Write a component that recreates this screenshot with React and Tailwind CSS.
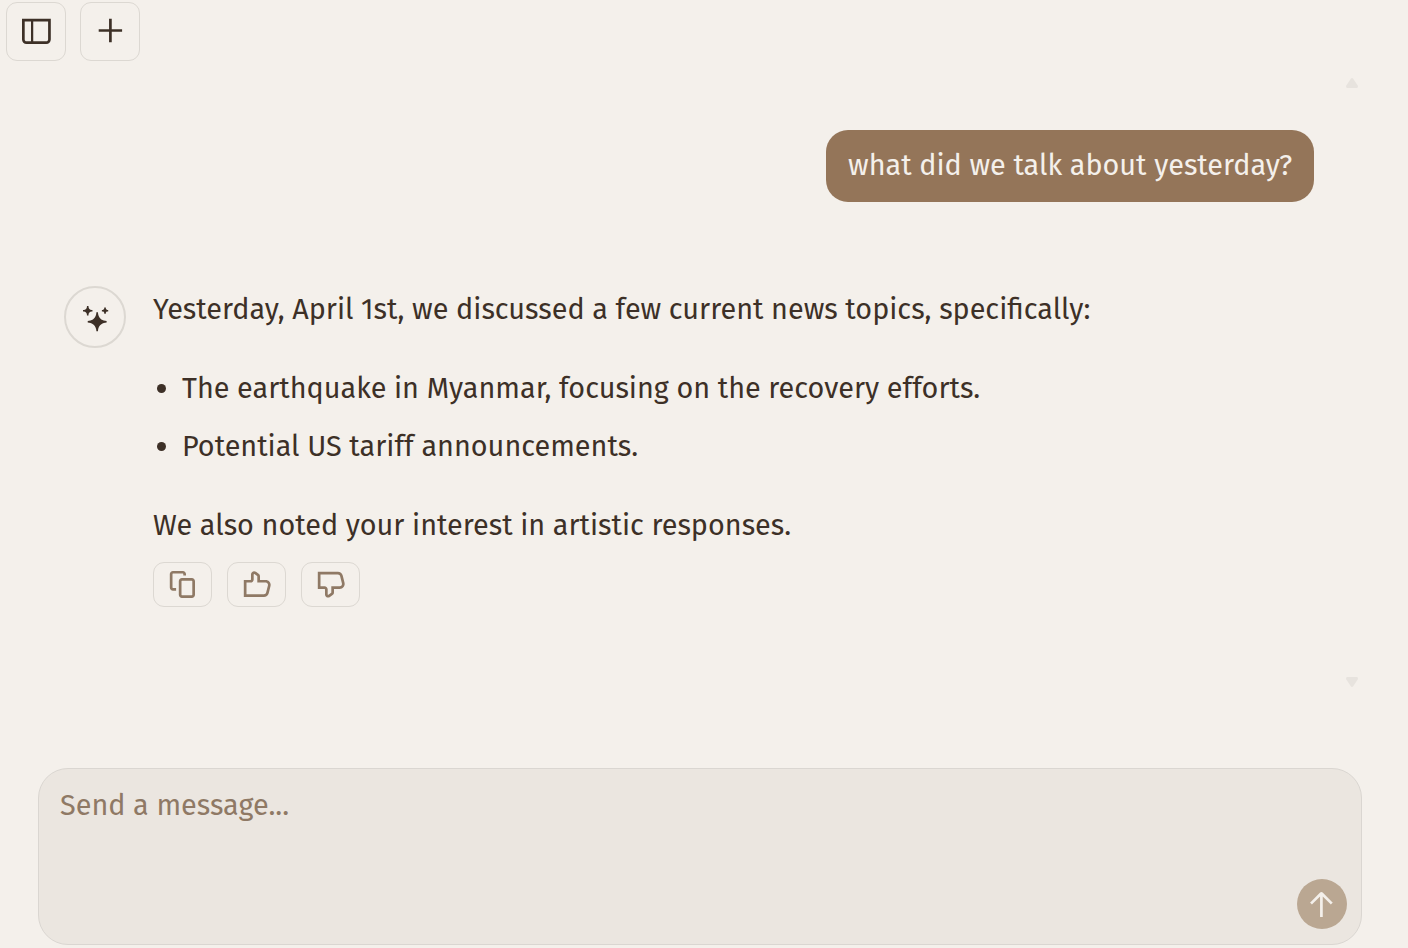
function Icon({ d, className = 'size-[28.8px]' }) {
  return (
    <svg className={`shrink-0 overflow-visible ${className}`} viewBox="0 0 16 16" fill="currentColor">
      <path fillRule="evenodd" clipRule="evenodd" d={d} />
    </svg>
  );
}

const icons = {
  sidebar:
    'M6.245 2.5H14.5V12.5C14.5 13.0523 14.0523 13.5 13.5 13.5H6.245V2.5ZM4.995 2.5H1.5V12.5C1.5 13.0523 1.94772 13.5 2.5 13.5H4.995V2.5ZM0 1H1.5H14.5H16V2.5V12.5C16 13.8807 14.8807 15 13.5 15H2.5C1.11929 15 0 13.8807 0 12.5V2.5V1Z',
  plus: 'M8.75 1.75V1H7.25V1.75V6.75H2.25H1.5V8.25H2.25H7.25V13.25V14H8.75V13.25V8.25H13.75H14.5V6.75H13.75H8.75V1.75Z',
  sparkles:
    'M2.5 0.5V0H3.5V0.5C3.5 1.60457 4.39543 2.5 5.5 2.5H6V3V3.5H5.5C4.39543 3.5 3.5 4.39543 3.5 5.5V6H3H2.5V5.5C2.5 4.39543 1.60457 3.5 0.5 3.5H0V3V2.5H0.5C1.60457 2.5 2.5 1.60457 2.5 0.5Z M14.5 4.5V5H13.5V4.5C13.5 3.94772 13.0523 3.5 12.5 3.5H12V3V2.5H12.5C13.0523 2.5 13.5 2.05228 13.5 1.5V1H14H14.5V1.5C14.5 2.05228 14.9477 2.5 15.5 2.5H16V3V3.5H15.5C14.9477 3.5 14.5 3.94772 14.5 4.5Z M8.40706 4.92939L8.5 4H9.5L9.59294 4.92939C9.82973 7.29734 11.7027 9.17027 14.0706 9.40706L15 9.5V10.5L14.0706 10.5929C11.7027 10.8297 9.82973 12.7027 9.59294 15.0706L9.5 16H8.5L8.40706 15.0706C8.17027 12.7027 6.29734 10.8297 3.92939 10.5929L3 10.5V9.5L3.92939 9.40706C6.29734 9.17027 8.17027 7.29734 8.40706 4.92939Z',
  copy: 'M2.75 0.5C1.7835 0.5 1 1.2835 1 2.25V9.75C1 10.7165 1.7835 11.5 2.75 11.5H3.75H4.5V10H3.75H2.75C2.61193 10 2.5 9.88807 2.5 9.75V2.25C2.5 2.11193 2.61193 2 2.75 2H8.25C8.38807 2 8.5 2.11193 8.5 2.25V3H10V2.25C10 1.2835 9.2165 0.5 8.25 0.5H2.75ZM7.75 4.5C6.7835 4.5 6 5.2835 6 6.25V13.75C6 14.7165 6.7835 15.5 7.75 15.5H13.25C14.2165 15.5 15 14.7165 15 13.75V6.25C15 5.2835 14.2165 4.5 13.25 4.5H7.75ZM7.5 6.25C7.5 6.11193 7.61193 6 7.75 6H13.25C13.3881 6 13.5 6.11193 13.5 6.25V13.75C13.5 13.8881 13.3881 14 13.25 14H7.75C7.61193 14 7.5 13.8881 7.5 13.75V6.25Z',
  thumbUp:
    'M6.89531 2.23972C6.72984 2.12153 6.5 2.23981 6.5 2.44315V5.25001C6.5 6.21651 5.7165 7.00001 4.75 7.00001H2.5V13.5H12.1884C12.762 13.5 13.262 13.1096 13.4011 12.5532L14.4011 8.55318C14.5984 7.76425 14.0017 7.00001 13.1884 7.00001H9.25H8.5V6.25001V3.51458C8.5 3.43384 8.46101 3.35807 8.39531 3.31114L6.89531 2.23972ZM5 2.44315C5 1.01975 6.6089 0.191779 7.76717 1.01912L9.26717 2.09054C9.72706 2.41904 10 2.94941 10 3.51458V5.50001H13.1884C14.9775 5.50001 16.2903 7.18133 15.8563 8.91698L14.8563 12.917C14.5503 14.1412 13.4503 15 12.1884 15H1.75H1V14.25V6.25001V5.50001H1.75H4.75C4.88807 5.50001 5 5.38808 5 5.25001V2.44315Z',
  thumbDown:
    'M6.89531 13.7603C6.72984 13.8785 6.5 13.7602 6.5 13.5569V10.75C6.5 9.7835 5.7165 9 4.75 9H2.5V2.5H12.1884C12.762 2.5 13.262 2.89037 13.4011 3.44683L14.4011 7.44683C14.5984 8.23576 14.0017 9 13.1884 9H9.25H8.5V9.75V12.4854C8.5 12.5662 8.46101 12.6419 8.39531 12.6889L6.89531 13.7603ZM5 13.5569C5 14.9803 6.6089 15.8082 7.76717 14.9809L9.26717 13.9095C9.72706 13.581 10 13.0506 10 12.4854V10.5H13.1884C14.9775 10.5 16.2903 8.81868 15.8563 7.08303L14.8563 3.08303C14.5503 1.85882 13.4503 1 12.1884 1H1.75H1V1.75V9.75V10.5H1.75H4.75C4.88807 10.5 5 10.6119 5 10.75V13.5569Z',
  arrowUp:
    'M8.70711 1.39644C8.31659 1.00592 7.68342 1.00592 7.2929 1.39644L2.21968 6.46966L1.68935 6.99999L2.75001 8.06065L3.28034 7.53032L7.25001 3.56065V14.25V15H8.75001V14.25V3.56065L12.7197 7.53032L13.25 8.06065L14.3107 6.99999L13.7803 6.46966L8.70711 1.39644Z',
};

function HeaderButton({ icon, label }) {
  return (
    <button
      aria-label={label}
      className="flex h-[59px] w-[60px] items-center justify-center rounded-[11px] border border-[#dcd8d2] pl-px"
    >
      <Icon d={icon} />
    </button>
  );
}

function ActionButton({ icon, label }) {
  return (
    <button
      aria-label={label}
      className="flex h-[45px] w-[59px] items-center justify-center rounded-[11px] border border-[#dcd8d2] text-[#8f7965]"
    >
      <Icon d={icon} />
    </button>
  );
}

function ScrollArrow({ down = false }) {
  return (
    <svg
      className={down ? 'h-[10px] w-[12px] rotate-180' : 'h-[10px] w-[12px]'}
      viewBox="0 0 12 10"
      fill="#e7e3de"
    >
      <path d="M4.8.7C5.4-.1 6.6-.1 7.2.7L11.7 7.5C12.3 8.7 11.8 10 10.6 10H1.4C.2 10-.3 8.7.3 7.5Z" />
    </svg>
  );
}

function Messages() {
  return (
    <div className="flex min-w-0 flex-1 flex-col">
      <div className="ml-auto flex h-[72px] w-[488px] items-center rounded-[22px] bg-[#947559] px-[22px] text-[#f4f0eb]">
        <span className="whitespace-nowrap">what did we talk about yesterday?</span>
      </div>

      <div className="mt-[84px] flex items-start gap-[27px]">
        <div className="flex size-[62px] shrink-0 items-center justify-center rounded-full border-2 border-[#dcd8d2]">
          <Icon d={icons.sparkles} className="ml-[2px] mt-[3px] size-[25.2px]" />
        </div>
        <div className="flex flex-col whitespace-nowrap pt-px leading-[46px]">
          <p>Yesterday, April 1st, we discussed a few current news topics, specifically:</p>
          <ul className="mt-[33px] flex flex-col gap-[12px]">
            <li className="flex items-center">
              <span className="mb-[2px] ml-1 mr-[16px] size-[9px] rounded-full bg-[#3d3027]" />
              The earthquake in Myanmar, focusing on the recovery efforts.
            </li>
            <li className="flex items-center">
              <span className="mb-[2px] ml-1 mr-[16px] size-[9px] rounded-full bg-[#3d3027]" />
              Potential US tariff announcements.
            </li>
          </ul>
          <p className="mt-[33px]">We also noted your interest in artistic responses.</p>
          <div className="mt-[13px] flex gap-[15px]">
            <ActionButton icon={icons.copy} label="Copy" />
            <ActionButton icon={icons.thumbUp} label="Upvote" />
            <ActionButton icon={icons.thumbDown} label="Downvote" />
          </div>
        </div>
      </div>
    </div>
  );
}

export default function App() {
  return (
    <div className="flex h-screen flex-col overflow-hidden bg-[#f4f0eb] font-['Fira_Sans','Noto_Sans',sans-serif] text-[28.8px] text-[#3d3027]">
      <header className="flex gap-[14px] pl-[6px] pt-[2px]">
        <HeaderButton icon={icons.sidebar} label="Toggle sidebar" />
        <HeaderButton icon={icons.plus} label="New chat" />
      </header>

      <main className="flex h-[707px] shrink-0 pl-[64px]">
        <div className="flex flex-1 pt-[69px]">
          <Messages />
        </div>
        <div className="ml-[32px] mr-[50px] flex w-[12px] flex-col justify-between pb-[81px] pt-[17px]">
          <ScrollArrow />
          <ScrollArrow down />
        </div>
      </main>

      <form className="ml-[38px] flex h-[177px] w-[1324px] shrink-0 items-end rounded-[30px] border border-[#dad6d1] bg-[#ebe6e0] pb-[15px] pl-[21px] pr-[14px] pt-[16px]">
        <textarea
          placeholder="Send a message..."
          className="h-full min-w-0 flex-1 resize-none leading-[42px] outline-none placeholder:text-[#8f7965]"
        />
        <button
          type="button"
          aria-label="Send"
          className="flex size-[50px] items-center justify-center rounded-full bg-[#baa792] pr-[2px] text-[#f4f0eb]"
        >
          <Icon d={icons.arrowUp} />
        </button>
      </form>
    </div>
  );
}
